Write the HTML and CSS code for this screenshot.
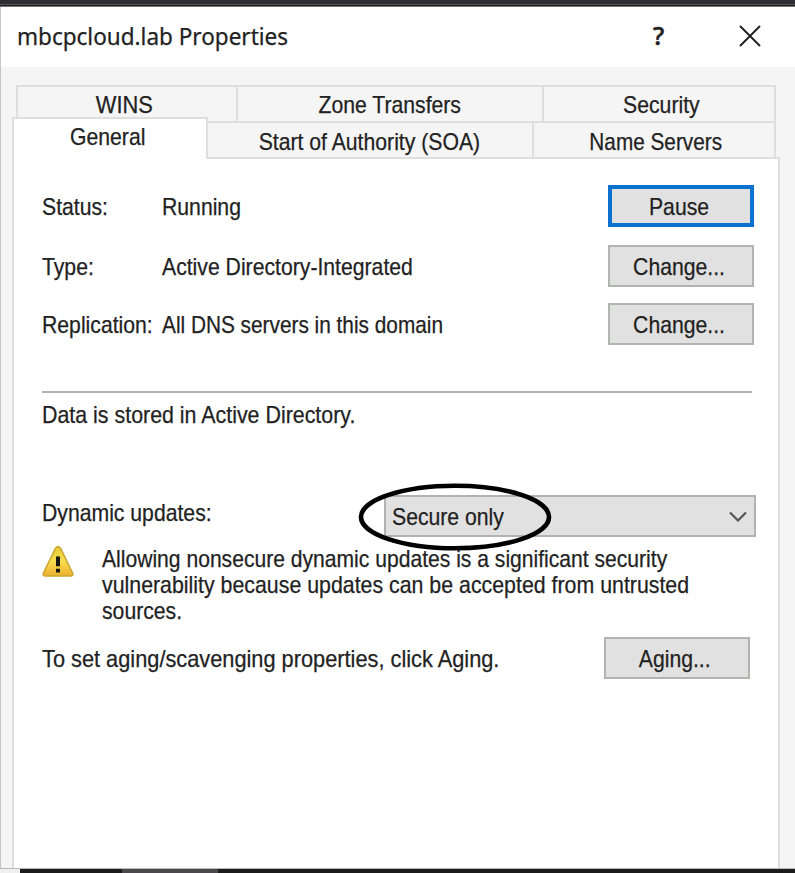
FILE: index.html
```html
<!DOCTYPE html>
<html lang="en">
<head>
<meta charset="utf-8">
<title>mbcpcloud.lab Properties</title>
<link rel="stylesheet" href="styles.css">
</head>
<body>
<div class="backdrop-top"></div>
<main class="dialog">
  <header class="titlebar">
    <h1 class="title">mbcpcloud.lab Properties</h1>
    <span class="help">?</span>
    <svg class="close" viewBox="0 0 22 22"><path d="M1 1 21 21M21 1 1 21"/></svg>
  </header>
  <div class="content">
    <div class="tabs-back">
      <div class="tab wins"><span class="t">WINS</span></div>
      <div class="tab"><span class="t">Zone Transfers</span></div>
      <div class="tab security"><span class="t">Security</span></div>
    </div>
    <div class="tabs-front">
      <div class="tab selected"><span class="t">General</span></div>
      <div class="tab"><span class="t">Start of Authority (SOA)</span></div>
      <div class="tab name-servers"><span class="t">Name Servers</span></div>
    </div>
    <section class="panel">
      <div class="row"><span class="label"><span class="t">Status:</span></span><span class="value"><span class="t">Running</span></span><button class="btn default"><span class="t">Pause</span></button></div>
      <div class="row type"><span class="label"><span class="t">Type:</span></span><span class="value"><span class="t">Active Directory-Integrated</span></span><button class="btn"><span class="t">Change...</span></button></div>
      <div class="row replication"><span class="label"><span class="t">Replication:</span></span><span class="value"><span class="t">All DNS servers in this domain</span></span><button class="btn"><span class="t">Change...</span></button></div>
      <div class="rule"></div>
      <p class="stored"><span class="t">Data is stored in Active Directory.</span></p>
      <div class="updates">
        <span class="updates-label"><span class="t">Dynamic updates:</span></span>
        <div class="select">
          <span class="t">Secure only</span>
          <svg class="chevron" viewBox="0 0 18 12"><path d="M1 1.5 9 9.5 17 1.5"/></svg>
          <svg class="ring" viewBox="0 0 194 70"><ellipse cx="97" cy="35" rx="94" ry="31.3"/></svg>
        </div>
      </div>
      <div class="warning">
        <svg class="warn-icon" viewBox="0 0 32 31">
          <defs><linearGradient id="gold" x1="0" y1="0" x2="0" y2="1"><stop offset="0" stop-color="#e8cb38"/><stop offset=".5" stop-color="#f8dc50"/><stop offset="1" stop-color="#ecb02e"/></linearGradient></defs>
          <path class="tri" d="M13.5 2.2Q16 -.8 18.5 2.2L30.6 27Q31.6 30 29 30H3Q.4 30 1.4 27Z" fill="url(#gold)"/>
          <path class="bang" d="M14 10.5h4v9.7h-4zM14 22.8h4v3.8h-4z"/>
        </svg>
        <p class="warn-text"><span class="t">Allowing nonsecure dynamic updates is a significant security</span><span class="t">vulnerability because updates can be accepted from untrusted</span><span class="t">sources.</span></p>
      </div>
      <div class="aging"><span class="t">To set aging/scavenging properties, click Aging.</span><button class="btn"><span class="t">Aging...</span></button></div>
    </section>
  </div>
</main>
<footer class="backdrop-bottom"><span class="light"></span><span class="black"></span><span class="grey"></span><span class="rest"></span></footer>
</body>
</html>
```
FILE: styles.css
```css
* { box-sizing: border-box; }
body {
  margin: 0;
  width: 795px;
  height: 873px;
  overflow: hidden;
  display: flex;
  flex-direction: column;
  background: #f5f5f5;
  color: #222;
  font: 24px/26px "Liberation Sans", Arial, sans-serif;
  -webkit-text-stroke: .25px #222;
}
p, h1 { margin: 0; font-weight: 400; }
.t {
  display: inline-block;
  white-space: nowrap;
  transform: scaleX(.883);
  transform-origin: left center;
}
.tab .t, .btn .t { transform-origin: center; }
.backdrop-top {
  height: 7px;
  flex: none;
  background: linear-gradient(#2e2d33 0 4px, #56555a 4px 5px, #1d1b20 5px 6px, #77767a 6px 7px);
}
.dialog {
  height: 861px;
  flex: none;
  border-left: 1px solid #c6c6c6;
  background: #f5f5f5;
}
.titlebar {
  height: 60px;
  display: flex;
  align-items: center;
  padding-left: 16px;
  background: #fff;
  font-family: "Noto Sans", "Open Sans", sans-serif;
}
.title {
  width: 636px;
  margin-top: -2px;
  font-size: 24px;
  white-space: nowrap;
  transform: scaleX(.938);
  transform-origin: left center;
}
.help { width: 86px; margin-top: -4px; font-size: 25px; font-weight: 500; -webkit-text-stroke-width: .6px; }
.close { width: 22px; height: 22px; margin-top: -2px; fill: none; stroke: #222; stroke-width: 2; }
.content { padding-top: 18px; padding-left: 11px; }
.tabs-back {
  width: 760px;
  height: 36px;
  margin-left: 4px;
  display: grid;
  grid-template-columns: 220px 306px 234px;
  border: solid #dedede;
  border-width: 2px 2px 0 0;
}
.tab {
  display: flex;
  justify-content: center;
  align-items: center;
  border-left: 2px solid #dedede;
  padding-top: 2px;
}
.wins { padding-right: 6px; }
.wins .t { transform: scaleX(.91); }
.security { padding-left: 2px; }
.name-servers .t { transform: scaleX(.865); }
.name-servers { padding-left: 2px; }
.tabs-front {
  width: 764px;
  height: 36px;
  display: grid;
  grid-template-columns: 195px 325px 244px;
  border-right: 2px solid #dedede;
}
.tabs-front .tab { border-top: 2px solid #dedede; padding-top: 1px; }
.tabs-front .tab:nth-child(2) { border-left: 0; }
.tabs-front .selected {
  position: relative;
  z-index: 1;
  width: 196px;
  height: 42px;
  margin-top: -4px;
  padding: 0 5px 4px 0;
  background: #fff;
  border-right: 2px solid #dedede;
}
.panel {
  width: 768px;
  height: 711px;
  padding: 26px 0 0 28px;
  background: #fff;
  border: solid #dedede;
  border-width: 2px 2px 0;
}
.row { display: flex; height: 42px; align-items: center; }
.row.type { margin-top: 18px; }
.row.replication { margin-top: 16px; }
.label { width: 120px; padding-top: 2px; }
.value { width: 446px; padding-top: 2px; }
.replication .value .t { transform: scaleX(.867); }
.btn {
  width: 146px;
  height: 42px;
  flex: none;
  padding: 2px 4px 0 0;
  border: 2px solid #b2b4b1;
  background: #e1e1e1;
  color: #222;
  font: inherit;
}
.btn.default { border: 4px solid #0b72d0; padding-top: 1px; }
.rule { width: 710px; height: 2px; margin-top: 46px; background: #b0b0b0; }
.stored { margin-top: 9px; }
.stored .t { transform: scaleX(.891); }
.updates { display: flex; margin-top: 67px; height: 42px; }
.updates-label { width: 342px; padding-top: 5px; }
.select {
  position: relative;
  width: 372px;
  height: 42px;
  display: flex;
  align-items: center;
  padding: 2px 7px 0 6px;
  border: 2px solid #b2b2b2;
  background: #e1e1e1;
}
.chevron {
  width: 18px;
  height: 12px;
  margin-left: auto;
  fill: none;
  stroke: #555;
  stroke-width: 2.2;
}
.ring {
  position: absolute;
  left: -28px;
  top: -15px;
  width: 194px;
  height: 70px;
  fill: none;
  stroke: #000;
  stroke-width: 4.6;
}
.warning { display: flex; margin-top: 9px; height: 80px; }
.warn-icon { width: 32px; height: 31px; }
.tri { stroke: #caa62f; stroke-width: 1.5; }
.bang { fill: #171712; }
.warn-text { display: flex; flex-direction: column; margin-left: 28px; align-items: flex-start; }
.warn-text .t:nth-child(1) { transform: scaleX(.879); }
.warn-text .t:nth-child(2) { transform: scaleX(.889); }
.aging { display: flex; align-items: center; margin-top: 11px; height: 42px; }
.aging > .t { width: 562px; margin-top: 2px; transform: scaleX(.907); }
.backdrop-bottom {
  height: 5px;
  flex: none;
  display: grid;
  grid-template-columns: 20px 102px 96px 1fr;
  border-top: 1px solid #b8b8b8;
}
.light { background: #f0f0f0; }
.black, .rest { background: #1c1c1d; }
.grey { background: #4b474a; }
```
